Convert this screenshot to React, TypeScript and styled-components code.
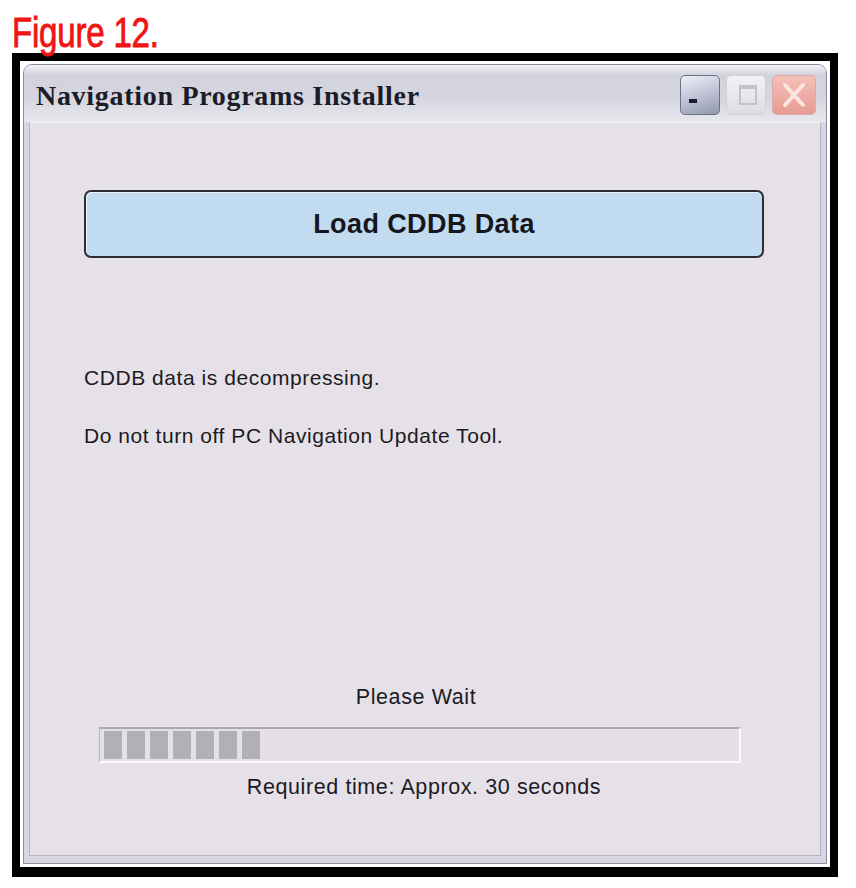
import React from 'react'
import styled, { createGlobalStyle } from 'styled-components'

const GlobalStyle = createGlobalStyle`
    html, body {
        margin: 0;
        padding: 0;
        background: #ffffff;
    }
    body {
        font-family: "Liberation Sans", Arial, sans-serif;
    }
`

const colors = {
    body: '#e6e1e8',
    frame: '#d6d6e0',
    text: '#1b1b1f',
    button: '#c1dbf1',
}

const Page = styled.div`
    width: 856px;
    height: 888px;
    padding: 11px 0 0 12px;
    box-sizing: border-box;
`

const Caption = styled.div`
    height: 42px;
    color: #f01414;
    font-size: 43px;
    line-height: 42px;
    font-weight: 400;
    letter-spacing: -0.3px;
    -webkit-text-stroke: 0.9px #f01414;
    transform: scaleX(0.77);
    transform-origin: left center;
    white-space: nowrap;
`

const Frame = styled.div`
    width: 826px;
    height: 824px;
    box-sizing: border-box;
    border: 8px solid #000;
    border-bottom-width: 10px;
    background: #fff;
    padding: 3px;
`

const Window = styled.div`
    height: 100%;
    box-sizing: border-box;
    display: flex;
    flex-direction: column;
    border: 1px solid #8e8ea0;
    border-radius: 9px 9px 0 0;
    background: ${colors.frame};
`

const TitleBar = styled.div`
    height: 57px;
    flex: none;
    display: flex;
    align-items: center;
    padding: 0 10px 0 12px;
    border-radius: 8px 8px 0 0;
    background: linear-gradient(#f2f2f6 0%, #d2d2dc 18%, #d6d6e0 60%, #e8e8ee 100%);
`

const Title = styled.div`
    flex: 1;
    font-family: "Liberation Serif", "Times New Roman", serif;
    font-weight: 700;
    font-size: 28px;
    color: #1c1c28;
    padding-top: 5px;
    letter-spacing: 0.7px;
`

const Controls = styled.div`
    display: flex;
    gap: 6px;
    padding-top: 2px;
`

const CtlButton = styled.div<{ kind: 'min' | 'max' | 'close' }>`
    width: ${p => (p.kind === 'close' ? 44 : 40)}px;
    height: 40px;
    box-sizing: border-box;
    border-radius: 5px;
    position: relative;
    ${p => p.kind === 'min' && `
        border: 1px solid #6c7088;
        background: linear-gradient(160deg, #eef0f8 0%, #c4c8d8 45%, #9296ae 100%);
    `}
    ${p => p.kind === 'max' && `
        border: 1px solid #cfd0d8;
        background: linear-gradient(#f2f2f6, #dcdce4);
    `}
    ${p => p.kind === 'close' && `
        border: 1px solid #e0a8a8;
        background: linear-gradient(#f4c0b8, #e69c94);
    `}
`

const MinDash = styled.div`
    position: absolute;
    left: 8px;
    bottom: 11px;
    width: 8px;
    height: 4px;
    background: #1a1c30;
`

const MaxBox = styled.div`
    position: absolute;
    left: 12px;
    top: 9px;
    width: 18px;
    height: 20px;
    box-sizing: border-box;
    border: 2px solid #c2c2ca;
    border-top-width: 4px;
`

const Client = styled.div`
    flex: 1;
    margin: 0 5px 7px 5px;
    border: 1px solid #b4b4c4;
    border-top-color: #f0f0f4;
    background: ${colors.body};
    display: flex;
    flex-direction: column;
    padding: 67px 56px 0 54px;
`

const LoadButton = styled.div`
    height: 68px;
    box-sizing: border-box;
    border: 2px solid #2c2c34;
    border-radius: 7px;
    background: ${colors.button};
    display: flex;
    align-items: center;
    justify-content: center;
    font-weight: 700;
    font-size: 27px;
    color: #16161c;
    letter-spacing: 0.4px;
    box-shadow: inset 1px 1px 0 #e6f2fc;
`

const Message = styled.div<{ gap: number }>`
    margin-top: ${p => p.gap}px;
    font-size: 21px;
    line-height: 24px;
    color: ${colors.text};
    letter-spacing: 0.55px;
`

const Progress = styled.div`
    margin: 0 23px 0 15px;
    display: flex;
    flex-direction: column;
    align-items: stretch;
`

const Note = styled.div<{ gap: number; shift: number }>`
    margin-top: ${p => p.gap}px;
    text-align: center;
    font-size: 21.5px;
    line-height: 24px;
    color: ${colors.text};
    letter-spacing: 0.6px;
    transform: translateX(${p => p.shift}px);
`

const Track = styled.div`
    margin-top: 18px;
    height: 36px;
    box-sizing: border-box;
    border-top: 2px solid #a8a8b0;
    border-left: 1px solid #b8b8c0;
    border-right: 2px solid #fafafc;
    border-bottom: 2px solid #fafafc;
    background: #e4e0e6;
    display: flex;
    gap: 5px;
    padding: 2px 0 2px 4px;
`

const Block = styled.div`
    width: 18px;
    background: #b1b0b6;
`

const App: React.FC = () => {
    const blocks = Array.from({ length: 7 }, (_, i) => i)
    return (
        <>
            <GlobalStyle />
            <Page>
                <Caption>Figure 12.</Caption>
                <Frame>
                    <Window>
                        <TitleBar>
                            <Title>Navigation Programs Installer</Title>
                            <Controls>
                                <CtlButton kind="min"><MinDash /></CtlButton>
                                <CtlButton kind="max"><MaxBox /></CtlButton>
                                <CtlButton kind="close">
                                    <svg width="42" height="38" viewBox="0 0 42 38" style={{ position: 'absolute', left: 0, top: 0 }}>
                                        <path d="M12 9 L30 29 M30 9 L12 29" stroke="#fbe4e2" strokeWidth="4" strokeLinecap="round" />
                                    </svg>
                                </CtlButton>
                            </Controls>
                        </TitleBar>
                        <Client>
                            <LoadButton>Load CDDB Data</LoadButton>
                            <Message gap={108}>CDDB data is decompressing.</Message>
                            <Message gap={34}>Do not turn off PC Navigation Update Tool.</Message>
                            <Progress>
                                <Note gap={237} shift={-4}>Please Wait</Note>
                                <Track>
                                    {blocks.map(i => <Block key={i} />)}
                                </Track>
                                <Note gap={12} shift={4}>Required time: Approx. 30 seconds</Note>
                            </Progress>
                        </Client>
                    </Window>
                </Frame>
            </Page>
        </>
    )
}
export default App
